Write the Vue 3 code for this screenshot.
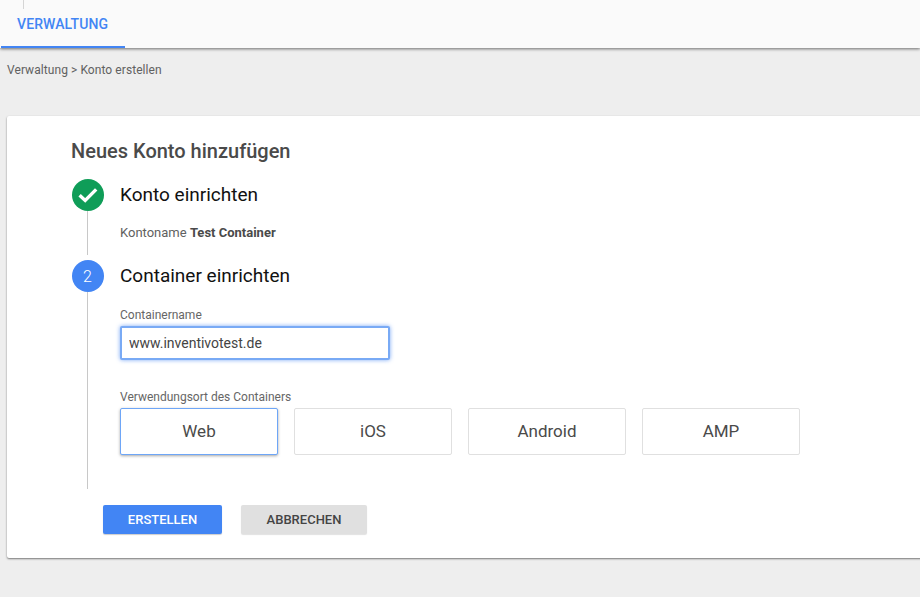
<script setup>
const platforms = ['Web', 'iOS', 'Android', 'AMP']
</script>

<template>
  <div class="page">
    <header class="topbar">
      <div class="tick"></div>
      <div class="tab">VERWALTUNG</div>
    </header>
    <div class="crumb">Verwaltung &gt; Konto erstellen</div>
    <main class="card">
      <h1 class="title">Neues Konto hinzufügen</h1>
      <section class="step step-one">
        <div class="rail">
          <div class="badge done">
            <svg width="20" height="16" viewBox="0 0 20 16"><path d="M1.6 8.2 7.2 13.4 18.2 2.4" fill="none" stroke="#fff" stroke-width="3.4"/></svg>
          </div>
          <div class="line"></div>
        </div>
        <div class="body">
          <h2 class="step-title">Konto einrichten</h2>
          <p class="summary">Kontoname <b>Test Container</b></p>
        </div>
      </section>
      <section class="step step-two">
        <div class="rail">
          <div class="badge active">2</div>
          <div class="line"></div>
        </div>
        <div class="body">
          <h2 class="step-title">Container einrichten</h2>
          <label class="label name-label">Containername</label>
          <input class="name-input" value="www.inventivotest.de" />
          <div class="label place-label">Verwendungsort des Containers</div>
          <div class="platforms">
            <button v-for="(p, i) in platforms" :key="p" class="platform" :class="{ selected: i === 0 }">{{ p }}</button>
          </div>
        </div>
      </section>
      <div class="actions">
        <button class="btn primary">ERSTELLEN</button>
        <button class="btn secondary">ABBRECHEN</button>
      </div>
    </main>
  </div>
</template>

<style>
html, body { margin: 0; background: #eeeeee; }
</style>

<style scoped>
.page {
  width: 920px;
  height: 597px;
  overflow: hidden;
  background: #eeeeee;
  font-family: Roboto, "Liberation Sans", sans-serif;
  color: #444;
}
.topbar {
  height: 48px;
  background: #fafafa;
  box-shadow: 0 1px 3px rgba(0, 0, 0, 0.55);
  padding-left: 1px;
  box-sizing: border-box;
  position: relative;
}
.tick {
  position: absolute;
  left: 23px;
  top: 0;
  width: 1px;
  height: 9px;
  background: #d5d5d5;
}
.tab {
  width: 124px;
  height: 48px;
  box-sizing: border-box;
  padding: 16px 0 0 16px;
  border-bottom: 2px solid #4285f4;
  color: #4285f4;
  font-size: 14px;
  line-height: 16px;
  font-weight: 500;
  letter-spacing: 0.1px;
}
.crumb {
  margin: 15px 0 0 7px;
  height: 14px;
  font-size: 12px;
  line-height: 14px;
  font-weight: 400;
  letter-spacing: 0.07px;
  color: #616161;
}
.card {
  margin: 39px 0 0 7px;
  width: 940px;
  height: 442px;
  box-sizing: border-box;
  padding: 24px 0 0 64px;
  background: #fff;
  border-radius: 2px;
  box-shadow: 0 1px 2px rgba(0, 0, 0, 0.5);
}
.title {
  margin: 0;
  font-size: 20px;
  line-height: 23px;
  font-weight: 500;
  color: #4a4a4a;
}
.step {
  display: flex;
  margin-left: 1px;
}
.step-one { margin-top: 16px; height: 81px; }
.step-two { height: 229px; }
.rail {
  width: 32px;
  display: flex;
  flex-direction: column;
  align-items: center;
}
.badge {
  width: 32px;
  height: 32px;
  flex: none;
  border-radius: 50%;
  display: flex;
  align-items: center;
  justify-content: center;
  color: #fff;
  font-size: 16px;
  font-weight: 300;
}
.done { background: #0f9d58; }
.active { background: #4285f4; padding-right: 1px; box-sizing: border-box; }
.line {
  width: 1px;
  flex: 1;
  background: #c8c8c8;
  margin-right: 1px;
}
.step-one .line { margin-bottom: 5px; }
.body { margin-left: 16px; }
.step-title {
  margin: 5px 0 0;
  font-size: 19px;
  line-height: 21px;
  font-weight: 400;
  color: #111;
}
.summary {
  margin: 21px 0 0;
  font-size: 13px;
  line-height: 14px;
  color: #616161;
}
.summary b { font-weight: 700; color: #4a4a4a; }
.label {
  display: block;
  font-size: 12px;
  line-height: 14px;
  color: #666;
}
.name-label { margin-top: 22px; }
.name-input {
  display: block;
  margin-top: 4px;
  width: 270px;
  height: 34px;
  box-sizing: border-box;
  padding: 0 7px;
  border: 2px solid #79aaf5;
  border-radius: 2px;
  outline: none;
  box-shadow: 0 0 4px rgba(66, 133, 244, 0.7);
  font-family: inherit;
  font-size: 14px;
  color: #444;
  background: #fff;
}
.place-label { margin-top: 30px; }
.platforms {
  display: flex;
  gap: 16px;
  margin-top: 4px;
}
.platform {
  width: 158px;
  height: 47px;
  padding: 0 0 2px;
  box-sizing: border-box;
  border: 1px solid #e0e0e0;
  border-radius: 2px;
  background: #fff;
  font-family: inherit;
  font-size: 17px;
  color: #4a4a4a;
}
.platform.selected {
  border-color: #6ea6f7;
  box-shadow: 0 1px 3px rgba(0, 0, 0, 0.35);
}
.actions {
  display: flex;
  gap: 19px;
  margin: 16px 0 0 32px;
}
.btn {
  height: 29px;
  padding: 0;
  border: none;
  border-radius: 2px;
  font-family: inherit;
  font-size: 13px;
  font-weight: 500;
}
.primary {
  width: 119px;
  background: #4285f4;
  color: #fff;
  box-shadow: 0 1px 1px rgba(0, 0, 0, 0.2);
}
.secondary {
  width: 126px;
  background: #e0e0e0;
  color: #444;
  box-shadow: 0 1px 1px rgba(0, 0, 0, 0.12);
}
</style>
